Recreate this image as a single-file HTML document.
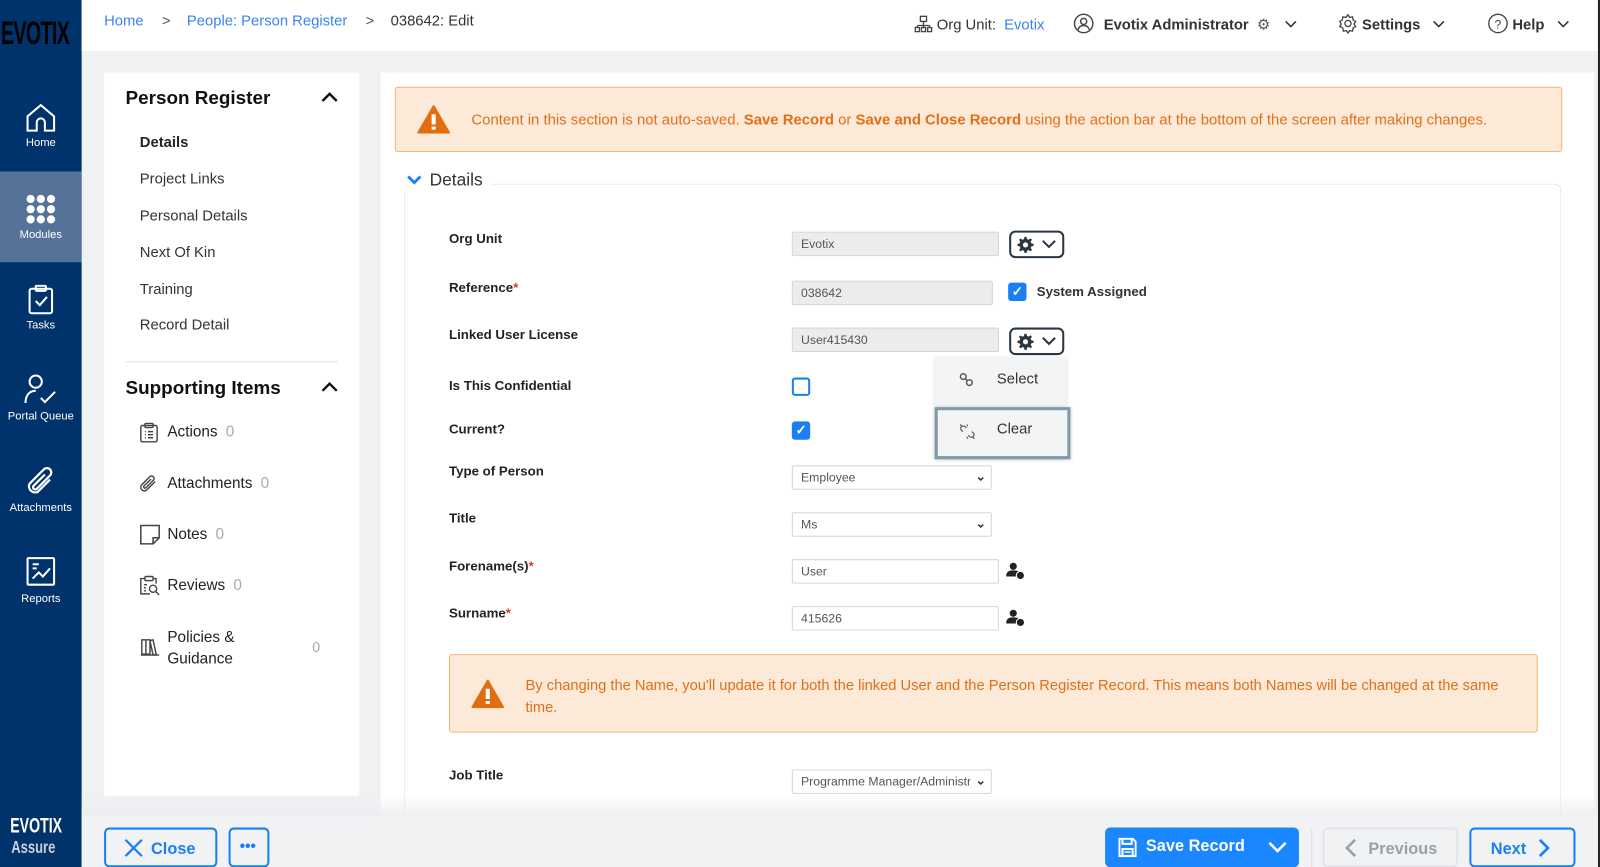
<!DOCTYPE html>
<html><head><meta charset="utf-8"><style>
*{box-sizing:border-box;margin:0;padding:0}
body{width:1600px;height:867px;overflow:hidden;background:#f0f1f3;font-family:"Liberation Sans",sans-serif;position:relative;color:#222}
#w{position:absolute;left:0;top:0;width:1568px;height:850px;transform:scale(1.0204);transform-origin:0 0}
.a{position:absolute}
.side{left:0;top:0;width:80px;height:850px;background:#00326b;overflow:hidden}
.nav{position:absolute;left:0;width:80px;height:89px;color:#fff;font-size:11px;text-align:center}
.nav svg{display:block;margin:0 auto 4px}
.top{left:80px;top:0;width:1488px;height:50px;background:#fff}
.lp{left:102px;top:71px;width:250px;height:709px;background:#fff}
.mp{left:373px;top:71px;width:1189px;height:740px;background:#fff}
.lbl{position:absolute;left:440px;font-size:13px;font-weight:bold;color:#222}
.req{color:#e0323c}
.inp{position:absolute;left:776px;height:24px;border:1px solid #d6d6d6;border-radius:2px;font-size:12px;color:#555;padding:4px 8px;background:#fff}
.ro{background:#ececec}
.cb{position:absolute;width:18px;height:18px;border-radius:3px;background:#1a7ff5;color:#fff;font-size:13px;line-height:18px;text-align:center;font-weight:bold}
.gear{position:absolute;left:989px;width:54px;height:27px;border:2px solid #2b3644;border-radius:6px}
.li{position:absolute;left:137px;font-size:14.5px;color:#333}
.si{position:absolute;left:164px;font-size:15px;color:#222}
.cnt{color:#aaa;margin-left:8px}
.warn{background:#fde9d7;border:1px solid #f7b372;border-radius:3px;color:#e07018;font-size:14px}
.btn{position:absolute;top:811px;height:39px;border:2px solid #1a7ff5;border-radius:5px;color:#1a7ff5;font-weight:bold;font-size:16px}
.ic{display:inline-block;vertical-align:-4px}
.chev{display:inline-block;vertical-align:1px}
</style></head><body><div id="w">
<div class="a side">
 <div class="a" style="left:1px;top:14px;font-size:32px;font-weight:bold;color:#000;letter-spacing:-1px;transform:scaleX(.6);transform-origin:left">EVOTIX</div>
 <div class="nav" style="top:80px;padding-top:20px"><svg width="30" height="30" viewBox="0 0 30 30" fill="none" stroke="#fff" stroke-width="2"><path d="M2 14L15 3l13 11v14H19v-8a4 4 0 0 0-8 0v8H2z"/></svg>Home</div>
 <div class="nav" style="top:168px;background:#557399;padding-top:22px"><svg width="30" height="30" viewBox="0 0 30 30" fill="#fff"><circle cx="5" cy="5" r="4"/><circle cx="15" cy="5" r="4"/><circle cx="25" cy="5" r="4"/><circle cx="5" cy="15" r="4"/><circle cx="15" cy="15" r="4"/><circle cx="25" cy="15" r="4"/><circle cx="5" cy="25" r="4"/><circle cx="15" cy="25" r="4"/><circle cx="25" cy="25" r="4"/></svg>Modules</div>
 <div class="nav" style="top:257px;padding-top:22px"><svg width="26" height="30" viewBox="0 0 26 30" fill="none" stroke="#fff" stroke-width="2"><rect x="2" y="4" width="22" height="24" rx="2"/><rect x="8" y="1" width="10" height="5" rx="1"/><path d="M8 16l4 4 7-8"/></svg>Tasks</div>
 <div class="nav" style="top:346px;padding-top:20px"><svg width="32" height="32" viewBox="0 0 32 32" fill="none" stroke="#fff" stroke-width="2"><circle cx="11" cy="8" r="6"/><path d="M1 29c0-8 4-12 10-12M16 24l4 4 10-10"/></svg>Portal Queue</div>
 <div class="nav" style="top:436px;padding-top:20px"><svg width="30" height="32" viewBox="0 0 30 32" fill="none" stroke="#fff" stroke-width="2.2"><path d="M24 14L12 26a6 6 0 0 1-8-8L18 4a4 4 0 0 1 6 6L11 23a2 2 0 0 1-3-3l11-11"/></svg>Attachments</div>
 <div class="nav" style="top:525px;padding-top:20px"><svg width="30" height="32" viewBox="0 0 30 32" fill="none" stroke="#fff" stroke-width="2"><rect x="2" y="2" width="26" height="26" rx="1"/><path d="M7 8h6M7 12h4M7 22l6-6 4 4 7-8"/></svg>Reports</div>
 <div class="a" style="left:10px;top:798px;color:#fff;font-weight:bold;font-size:21px;transform:scaleX(.66);transform-origin:left">EVOTIX</div>
 <div class="a" style="left:11px;top:821px;color:#c9d0da;font-weight:bold;font-size:17px;transform:scaleX(.75);transform-origin:left">Assure</div>
</div>
<div class="a top">
 <div class="a" style="left:22px;top:13px;font-size:14.5px;color:#3b82f6">Home<span style="color:#555;margin:0 16px 0 18px">&gt;</span>People: Person Register<span style="color:#555;margin:0 16px 0 18px">&gt;</span><span style="color:#333">038642: Edit</span></div>
 <div class="a" style="left:816px;top:13px;font-size:14.5px;color:#333;white-space:nowrap">
  <svg class="ic" width="18" height="18" viewBox="0 0 18 18" fill="none" stroke="#444" stroke-width="1.3"><rect x="6" y="1" width="6" height="5"/><path d="M9 6v4M3 10h12M3 10v2M9 10v2M15 10v2"/><rect x="1" y="12" width="4" height="4"/><rect x="7" y="12" width="4" height="4"/><rect x="13" y="12" width="4" height="4"/></svg> Org Unit: <span style="color:#3b82f6;margin-left:4px">Evotix</span>
  <svg class="ic" style="margin-left:24px" width="20" height="20" viewBox="0 0 20 20" fill="none" stroke="#444" stroke-width="1.4"><circle cx="10" cy="10" r="9"/><circle cx="10" cy="8" r="3"/><path d="M4.5 16c1-3 3-4 5.5-4s4.5 1 5.5 4"/></svg>
  <b style="margin-left:6px">Evotix Administrator</b> <span style="color:#555;margin-left:4px">⚙</span><svg class="chev" style="margin-left:14px" width="12" height="8" viewBox="0 0 12 8" fill="none" stroke="#333" stroke-width="1.6"><path d="M1 1l5 5 5-5"/></svg>
  <svg class="ic" style="margin-left:36px" width="20" height="20" viewBox="0 0 20 20" fill="none" stroke="#444" stroke-width="1.3"><circle cx="10" cy="10" r="3"/><path d="M10 1.5l1.5 2.5 3-.5.5 3 2.5 1.5-1.5 2.5 1.5 2.5-2.5 1.5-.5 3-3-.5-1.5 2.5-1.5-2.5-3 .5-.5-3L2 13l1.5-2.5L2 8l2.5-1.5.5-3 3 .5z"/></svg> <b>Settings</b><svg class="chev" style="margin-left:12px" width="12" height="8" viewBox="0 0 12 8" fill="none" stroke="#333" stroke-width="1.6"><path d="M1 1l5 5 5-5"/></svg>
  <svg class="ic" style="margin-left:38px" width="20" height="20" viewBox="0 0 20 20" fill="none" stroke="#444" stroke-width="1.3"><circle cx="10" cy="10" r="9"/><text x="10" y="15" font-size="12" text-anchor="middle" fill="#444" stroke="none" font-family="Liberation Sans">?</text></svg> <b>Help</b><svg class="chev" style="margin-left:12px" width="12" height="8" viewBox="0 0 12 8" fill="none" stroke="#333" stroke-width="1.6"><path d="M1 1l5 5 5-5"/></svg>
 </div>
</div>
<div class="a" style="left:1566px;top:0;width:2px;height:850px;background:#222"></div>
<div class="a lp">
 <div class="a" style="left:21px;top:14px;font-size:18.5px;font-weight:bold;color:#111">Person Register</div>
 <svg class="a" style="left:213px;top:19px" width="16" height="10" viewBox="0 0 16 10" fill="none" stroke="#111" stroke-width="2.4"><path d="M1 9l7-7 7 7"/></svg>
</div>
<div class="li" style="top:132px;font-weight:bold;color:#222">Details</div>
<div class="li" style="top:168px">Project Links</div>
<div class="li" style="top:204px">Personal Details</div>
<div class="li" style="top:240px">Next Of Kin</div>
<div class="li" style="top:276px">Training</div>
<div class="li" style="top:311px">Record Detail</div>
<div class="a" style="left:123px;top:354px;width:208px;height:1px;background:#dde2e7"></div>
<div class="a" style="left:123px;top:369px;font-size:18.5px;font-weight:bold;color:#111">Supporting Items</div>
<svg class="a" style="left:315px;top:374px" width="16" height="10" viewBox="0 0 16 10" fill="none" stroke="#111" stroke-width="2.4"><path d="M1 9l7-7 7 7"/></svg>
<div class="si" style="top:415px">Actions<span class="cnt">0</span></div>
<svg class="a" style="left:137px;top:414px" width="18" height="20" viewBox="0 0 18 20" fill="none" stroke="#444" stroke-width="1.4"><rect x="1" y="3" width="16" height="16" rx="1.5"/><rect x="5" y="1" width="8" height="4" rx="1"/><path d="M5 9h1M8 9h5M5 12h1M8 12h5M5 15h1M8 15h5"/></svg>
<div class="si" style="top:465px">Attachments<span class="cnt">0</span></div>
<svg class="a" style="left:137px;top:464px" width="18" height="20" viewBox="0 0 18 20" fill="none" stroke="#444" stroke-width="1.4"><path d="M15 8L7 16a3.5 3.5 0 0 1-5-5l8-8a2.5 2.5 0 0 1 3.5 3.5L6 14a1.2 1.2 0 0 1-1.8-1.8L11 5.5"/></svg>
<div class="si" style="top:515px">Notes<span class="cnt">0</span></div>
<svg class="a" style="left:137px;top:514px" width="20" height="20" viewBox="0 0 20 20" fill="none" stroke="#444" stroke-width="1.5"><path d="M1 1h18v12l-6 6H1z M19 13h-6v6"/></svg>
<div class="si" style="top:565px">Reviews<span class="cnt">0</span></div>
<svg class="a" style="left:137px;top:563px" width="20" height="21" viewBox="0 0 20 21" fill="none" stroke="#444" stroke-width="1.4"><path d="M10 19H1V4h4M13 4h3v5"/><rect x="5" y="2" width="8" height="4" rx="1"/><circle cx="13" cy="14" r="3.5"/><path d="M15.5 16.5L19 20M4 10h3M4 13h2M4 16h2"/></svg>
<div class="si" style="top:614px;line-height:21px">Policies &amp;<br>Guidance</div>
<svg class="a" style="left:137px;top:624px" width="20" height="20" viewBox="0 0 20 20" fill="none" stroke="#444" stroke-width="1.4"><path d="M2 3h4v14H2zM6 3h4v14H6zM10 4l3-1 3 14-3 1zM1 18h18"/></svg>
<div class="a" style="left:306px;top:626px;color:#aaa;font-size:14px">0</div>

<div class="a mp"></div>
<div class="a warn" style="left:387px;top:85px;width:1144px;height:64px;padding:24px 0 0 74px;font-size:14.6px;white-space:nowrap">
 Content in this section is not auto-saved. <b>Save Record</b> or <b>Save and Close Record</b> using the action bar at the bottom of the screen after making changes.
</div>
<svg class="a" style="left:409px;top:103px" width="32" height="28" viewBox="0 0 32 28"><path d="M16 1L31 27H1z" fill="#e06d10" stroke="#e06d10" stroke-linejoin="round" stroke-width="2"/><rect x="14" y="9" width="4" height="10" fill="#fff"/><rect x="14" y="21" width="4" height="3" fill="#fff"/></svg>
<div class="a" style="left:396px;top:180px;width:1134px;height:640px;border:1px solid #e6eaee;border-bottom:none;border-radius:6px 6px 0 0"></div>
<div class="a" style="left:396px;top:167px;background:#fff;padding:0 10px 0 0;font-size:17px;color:#333"><svg style="vertical-align:1px;margin:0 8px 0 3px" width="14" height="9" viewBox="0 0 14 9" fill="none" stroke="#1a7ff5" stroke-width="2.8"><path d="M1 1l6 6 6-6"/></svg>Details</div>

<div class="lbl" style="top:226px">Org Unit</div>
<div class="inp ro" style="top:227px;width:203px">Evotix</div>
<div class="gear" style="top:226px"><svg class="a" style="left:6px;top:4px" width="16" height="16" viewBox="0 0 16 16"><path fill="#2b3644" d="M7 0h2l.4 2.2 1.6.7 1.9-1.3 1.4 1.4-1.3 1.9.7 1.6L16 7v2l-2.2.4-.7 1.6 1.3 1.9-1.4 1.4-1.9-1.3-1.6.7L9 16H7l-.4-2.2-1.6-.7-1.9 1.3-1.4-1.4 1.3-1.9-.7-1.6L0 9V7l2.2-.4.7-1.6-1.3-1.9 1.4-1.4 1.9 1.3 1.6-.7z"/><circle cx="8" cy="8" r="2.5" fill="#fff"/></svg><svg class="a" style="left:30px;top:7px" width="14" height="9" viewBox="0 0 14 9" fill="none" stroke="#2b3644" stroke-width="2"><path d="M1 1l6 6 6-6"/></svg></div>
<div class="lbl" style="top:274px">Reference<span class="req">*</span></div>
<div class="inp ro" style="top:275px;width:197px">038642</div>
<div class="cb" style="left:988px;top:277px">✓</div>
<div class="a" style="left:1016px;top:278px;font-size:13px;color:#333;font-weight:bold">System Assigned</div>
<div class="lbl" style="top:320px">Linked User License</div>
<div class="inp ro" style="top:321px;width:203px">User415430</div>
<div class="gear" style="top:321px"><svg class="a" style="left:6px;top:4px" width="16" height="16" viewBox="0 0 16 16"><path fill="#2b3644" d="M7 0h2l.4 2.2 1.6.7 1.9-1.3 1.4 1.4-1.3 1.9.7 1.6L16 7v2l-2.2.4-.7 1.6 1.3 1.9-1.4 1.4-1.9-1.3-1.6.7L9 16H7l-.4-2.2-1.6-.7-1.9 1.3-1.4-1.4 1.3-1.9-.7-1.6L0 9V7l2.2-.4.7-1.6-1.3-1.9 1.4-1.4 1.9 1.3 1.6-.7z"/><circle cx="8" cy="8" r="2.5" fill="#fff"/></svg><svg class="a" style="left:30px;top:7px" width="14" height="9" viewBox="0 0 14 9" fill="none" stroke="#2b3644" stroke-width="2"><path d="M1 1l6 6 6-6"/></svg></div>
<div class="lbl" style="top:370px">Is This Confidential</div>
<div class="a" style="left:776px;top:370px;width:18px;height:18px;border:2px solid #1a7ff5;border-radius:3px"></div>
<div class="lbl" style="top:413px">Current?</div>
<div class="cb" style="left:776px;top:413px">✓</div>
<div class="a" style="left:916px;top:350px;width:129px;height:48px;background:#f3f4f6;box-shadow:0 1px 3px rgba(0,0,0,.15)"><svg class="a" style="left:24px;top:15px" width="14" height="14" viewBox="0 0 14 14" fill="none" stroke="#555" stroke-width="1.4"><circle cx="4" cy="4" r="2.8"/><circle cx="10" cy="10" r="2.8"/><path d="M6 6l2 2"/></svg><span class="a" style="left:61px;top:14px;font-size:14.5px;color:#333">Select</span></div>
<div class="a" style="left:916px;top:399px;width:133px;height:51px;background:#f3f4f6;border:3px solid #7f9aa8;box-shadow:0 1px 3px rgba(0,0,0,.3)"><svg class="a" style="left:21px;top:13px" width="16" height="16" viewBox="0 0 16 16" fill="none" stroke="#666" stroke-width="1.3"><path d="M7 4.5L5.5 3a2.5 2.5 0 0 0-3.5 3.5L3.5 8M9 11.5l1.5 1.5a2.5 2.5 0 0 0 3.5-3.5L12.5 8M1 1l2 2M13 13l2 2M8 1v2M8 13v2"/></svg><span class="a" style="left:58px;top:11px;font-size:14.5px;color:#333">Clear</span></div>
<div class="lbl" style="top:454px">Type of Person</div>
<div class="inp" style="top:456px;width:196px">Employee<span class="a" style="right:5px;top:3px;font-size:12px;color:#333;font-weight:bold">⌄</span></div>
<div class="lbl" style="top:500px">Title</div>
<div class="inp" style="top:502px;width:196px">Ms<span class="a" style="right:5px;top:3px;font-size:12px;color:#333;font-weight:bold">⌄</span></div>
<div class="lbl" style="top:547px">Forename(s)<span class="req">*</span></div>
<div class="inp" style="top:548px;width:203px">User</div>
<svg class="a" style="left:986px;top:551px" width="20" height="18" viewBox="0 0 20 18"><circle cx="7" cy="4" r="3.5" fill="#222"/><path d="M0 14c0-5 3-6 7-6s6 1 7 3v3z" fill="#222"/><circle cx="14" cy="13" r="4" fill="#222" stroke="#fff" stroke-width="1"/></svg>
<div class="lbl" style="top:593px">Surname<span class="req">*</span></div>
<div class="inp" style="top:594px;width:203px">415626</div>
<svg class="a" style="left:986px;top:597px" width="20" height="18" viewBox="0 0 20 18"><circle cx="7" cy="4" r="3.5" fill="#222"/><path d="M0 14c0-5 3-6 7-6s6 1 7 3v3z" fill="#222"/><circle cx="14" cy="13" r="4" fill="#222" stroke="#fff" stroke-width="1"/></svg>
<div class="a warn" style="left:440px;top:641px;width:1067px;height:77px;padding:19px 12px 0 74px;line-height:22px;font-size:14.4px">By changing the Name, you'll update it for both the linked User and the Person Register Record. This means both Names will be changed at the same time.</div>
<svg class="a" style="left:462px;top:666px" width="32" height="28" viewBox="0 0 32 28"><path d="M16 1L31 27H1z" fill="#e06d10" stroke="#e06d10" stroke-linejoin="round" stroke-width="2"/><rect x="14" y="9" width="4" height="10" fill="#fff"/><rect x="14" y="21" width="4" height="3" fill="#fff"/></svg>
<div class="lbl" style="top:752px">Job Title</div>
<div class="inp" style="top:754px;width:196px;white-space:nowrap;overflow:hidden">Programme Manager/Administra<span class="a" style="right:0;top:0;padding:3px 5px;background:#fff;font-size:12px;color:#333;font-weight:bold">⌄</span></div>

<div class="a" style="left:80px;top:780px;width:1486px;height:22px;background:linear-gradient(rgba(255,255,255,0),rgba(236,237,240,1))"></div>
<div class="a" style="left:80px;top:800px;width:1486px;height:50px;background:#f1f2f4"></div>
<div class="btn" style="left:102px;width:111px;padding:9px 0 0 18px"><svg style="vertical-align:-3px;margin-right:8px" width="18" height="18" viewBox="0 0 18 18" fill="none" stroke="#1a7ff5" stroke-width="2.2"><path d="M1 1l16 16M17 1L1 17"/></svg>Close</div>
<div class="btn" style="left:224px;width:40px;padding:8px 0 0 9px;font-size:15px">•••</div>
<div class="a" style="left:1083px;top:811px;width:190px;height:39px;background:#1a86ff;border-radius:5px;color:#fff;font-weight:bold;font-size:16px;padding:10px 0 0 40px">Save Record<svg class="a" style="left:13px;top:10px" width="18" height="19" viewBox="0 0 18 19" fill="none" stroke="#fff" stroke-width="2"><path d="M1 1h13l3 3v14H1z"/><path d="M4 1v5h9V1M4 11h10v7H4z"/><path d="M6 14h6" stroke-width="1.3"/></svg><svg class="a" style="right:12px;top:14px" width="18" height="11" viewBox="0 0 18 11" fill="none" stroke="#fff" stroke-width="2.6"><path d="M1 1l8 8 8-8"/></svg></div>
<div class="a" style="left:1285px;top:813px;width:1px;height:37px;background:#d8dbe0"></div>
<div class="a" style="left:1296px;top:811px;width:133px;height:39px;border:2px solid #e2e4e8;border-radius:5px;color:#9aa0a8;font-weight:bold;font-size:16px;padding:9px 0 0 20px"><svg style="vertical-align:-3px;margin-right:12px" width="11" height="18" viewBox="0 0 11 18" fill="none" stroke="#9aa0a8" stroke-width="2.6"><path d="M10 1L2 9l8 8"/></svg>Previous</div>
<div class="btn" style="left:1440px;width:104px;padding:9px 0 0 19px">Next<svg style="vertical-align:-3px;margin-left:12px" width="11" height="18" viewBox="0 0 11 18" fill="none" stroke="#1a7ff5" stroke-width="2.6"><path d="M1 1l8 8-8 8"/></svg></div>
</div></body></html>
